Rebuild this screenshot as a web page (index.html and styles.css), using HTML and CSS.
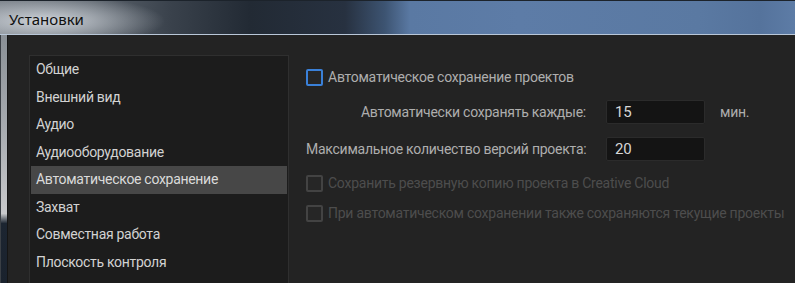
FILE: index.html
```html
<!DOCTYPE html>
<html lang="ru">
<head>
    <meta charset="UTF-8">
    <meta name="viewport" content="width=device-width, initial-scale=1.0">
    <title>Установки</title>
    <link rel="stylesheet" href="styles.css">
</head>
<body>
    <div class="window">
        <div class="titlebar">
            <span class="title">Установки</span>
        </div>
        <div class="frame">
            <div class="frame-edge"></div>
            <div class="content">
                <ul class="nav">
                    <li>Общие</li>
                    <li>Внешний вид</li>
                    <li>Аудио</li>
                    <li>Аудиооборудование</li>
                    <li class="active">Автоматическое сохранение</li>
                    <li>Захват</li>
                    <li>Совместная работа</li>
                    <li>Плоскость контроля</li>
                </ul>

                <div class="panel">
                    <label class="check-row">
                        <span class="box focus"></span>
                        Автоматическое сохранение проектов
                    </label>

                    <div class="form">
                        <span class="field-label">Автоматически сохранять каждые:</span>
                        <span class="field">15</span>
                        <span class="unit">мин.</span>

                        <span class="field-label">Максимальное количество версий проекта:</span>
                        <span class="field">20</span>
                        <span></span>
                    </div>

                    <label class="check-row disabled first">
                        <span class="box"></span>
                        Сохранить резервную копию проекта в Creative Cloud
                    </label>
                    <label class="check-row disabled">
                        <span class="box"></span>
                        При автоматическом сохранении также сохраняются текущие проекты
                    </label>
                </div>
            </div>
        </div>
    </div>
</body>
</html>
```

FILE: styles.css
```css
html, body {
    margin: 0;
    padding: 0;
    background: #232323;
}
body {
    font-family: Roboto, "Noto Sans", sans-serif;
    width: 795px;
    height: 283px;
    overflow: hidden;
}
.window {
    display: flex;
    flex-direction: column;
    height: 283px;
}
.titlebar {
    height: 33px;
    border-top: 1px solid #1c232b;
    border-bottom: 1px solid #b9c7d8;
    background:
        radial-gradient(ellipse 120px 26px at 45px 20px, rgba(212, 217, 223, 0.95), rgba(212, 217, 223, 0) 100%),
        linear-gradient(to right, #737a82 0, #5e666f 90px, #3a424c 170px, #222a34 250px, #273140 345px, #3d5472 385px, #5a79a3 410px, #5d7ca7 520px, #5a79a2 700px, #55739c 760px, #5d7ca6 795px);
    display: flex;
    align-items: center;
}
.title {
    margin-left: 9px;
    margin-top: 3px;
    font-family: "Noto Sans", sans-serif;
    font-size: 15px;
    color: #101010;
}
.frame {
    flex: 1;
    display: flex;
}
.frame-edge {
    flex-shrink: 0;
    width: 6px;
    border-left: 1px solid #3a3f45;
    border-right: 1px solid #151515;
    background: linear-gradient(to bottom, #8a9096 0, #a9adb2 40%, #c9cacc 72%, #1c2531 76%, #1a222d 100%);
}
.content {
    flex: 1;
    min-width: 0;
    display: flex;
    gap: 17px;
    padding: 20px 0 0 21px;
    background: #232323;
}
.nav {
    flex-shrink: 0;
    list-style: none;
    margin: 0;
    padding: 0 1px;
    width: 256px;
    background: #1c1c1c;
    border: 1px solid #2f2f2f;
    border-bottom: none;
    font-size: 14px;
    letter-spacing: -0.3px;
    color: #d2d2d2;
}
.nav li {
    height: 27.5px;
    line-height: 27.5px;
    padding-left: 5px;
    white-space: nowrap;
}
.nav li.active {
    background: #474747;
    color: #dadada;
}
.panel {
    display: flex;
    flex-direction: column;
    padding-top: 12px;
    font-size: 14px;
    letter-spacing: -0.25px;
    color: #aeaeae;
}
.check-row {
    display: flex;
    align-items: center;
    gap: 5px;
    height: 20px;
    white-space: nowrap;
}
.check-row.first {
    margin-top: 12px;
    margin-bottom: 10px;
}
.check-row.disabled {
    color: #4d4d4d;
}
.box {
    flex-shrink: 0;
    width: 13px;
    height: 13px;
    border: 2px solid #434343;
    border-radius: 2px;
    background: #262626;
}
.box.focus {
    border-color: #3a80d8;
}
.form {
    display: grid;
    grid-template-columns: 280px 99px auto;
    column-gap: 20px;
    row-gap: 13px;
    align-items: center;
    margin-top: 13px;
}
.field-label {
    text-align: right;
    white-space: nowrap;
}
.field {
    height: 22px;
    line-height: 22px;
    padding-left: 8px;
    background: #141414;
    border: 1px solid #2b2b2b;
    border-radius: 2px;
    color: #d6d6d6;
    font-size: 15px;
}
.unit {
    margin-left: -5px;
}
```
